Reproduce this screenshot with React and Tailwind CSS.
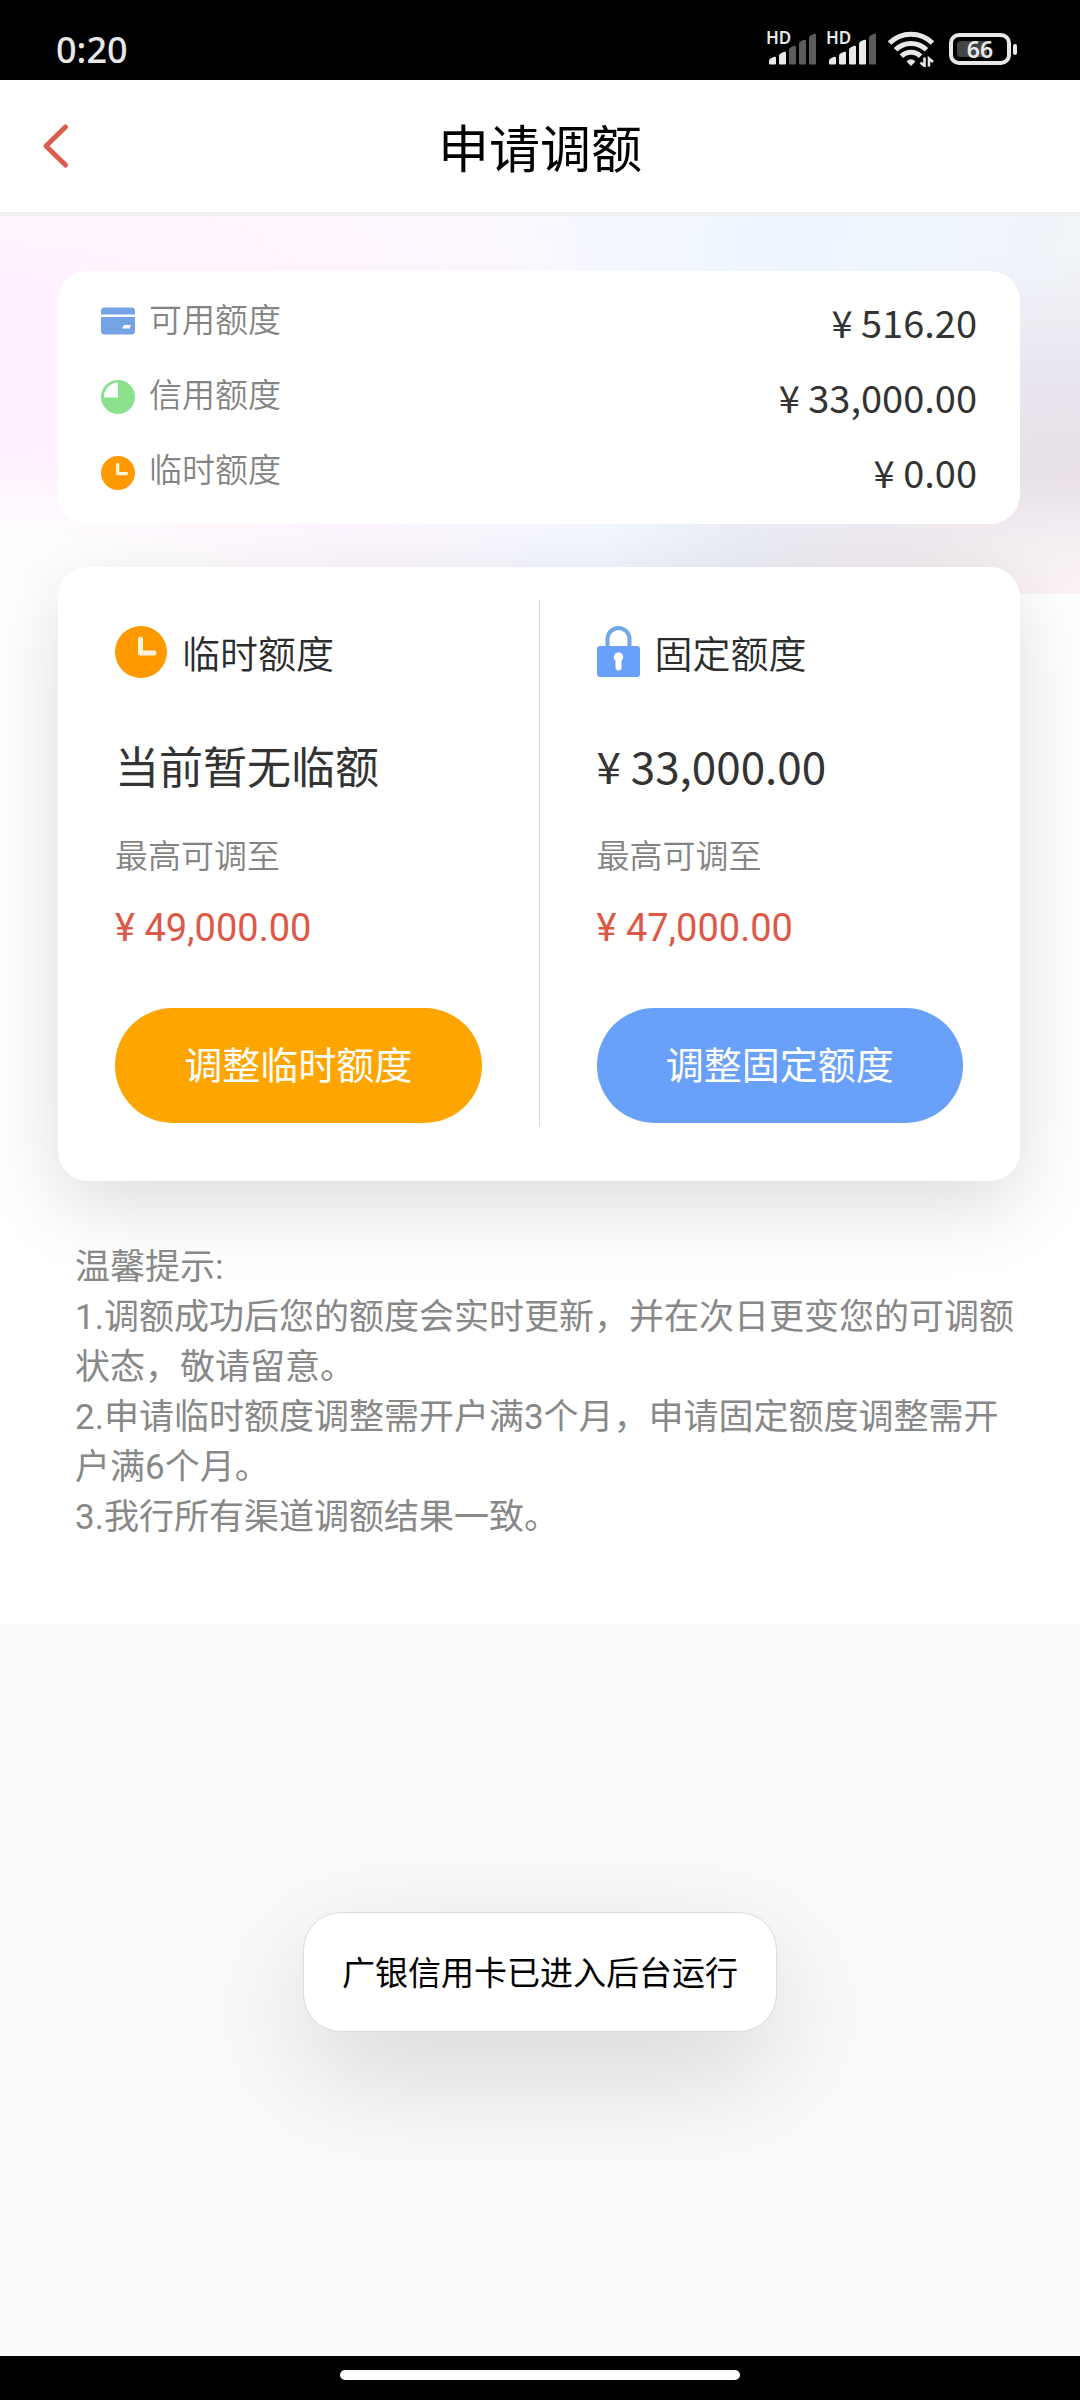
const CJK = "font-['Noto_Sans_CJK_SC',sans-serif]";
const MIXED = "font-['Roboto','Noto_Sans_CJK_SC',sans-serif]";

function Signal({ strength }) {
  const heights = [8, 13, 19, 25, 31];
  return (
    <svg className="h-12 w-[52px]" viewBox="0 -6 52 48" aria-hidden="true">
      <text x="-1" y="13" fontSize="17" fontWeight="600" fill="#e8e8e8" fontFamily="Noto Sans, sans-serif">HD</text>
      {heights.map((h, i) => (
        <path
          key={h}
          d={`M${2 + i * 10} ${34 - h + 4} q0 -2 1.5 -2.6 l3.5 -1.6 q2 -0.6 2 1 V32.5 q0 1 -1 1 h-5 q-1 0 -1 -1z`}
          fill={i < strength ? "#e8e8e8" : "#5c5c5c"}
        />
      ))}
    </svg>
  );
}

function Wifi() {
  return (
    <svg className="h-9 w-12" viewBox="0 0 48 36" fill="none" stroke="#e8e8e8" strokeWidth="5" aria-hidden="true">
      <path d="M2.500 12 A30.500 30.500 0 0 1 45.500 12" />
      <path d="M8.500 18.800 A22 22 0 0 1 39.500 18.800" />
      <path d="M14.500 25.200 A13.500 13.500 0 0 1 33.500 25.200" />
      <path d="M24 35 L19.500 30.500 Q24 26 28.500 30.500z" fill="#e8e8e8" stroke="none" />
      <path d="M37.500 26.500 V35 L33.500 31.500 M42 35.500 V27.500 L46 31" strokeWidth="2.6" />
    </svg>
  );
}

function Battery({ level }) {
  return (
    <div className="flex items-center gap-0.5">
      <div className="relative flex h-8 w-[62px] items-center justify-center rounded-[10px] border-4 border-[#e8e8e8] bg-black">
        <div className="absolute inset-y-1 left-1 rounded-sm bg-[#444444]" style={{ width: `${level * 0.46}px` }} />
        <span className="relative font-['Noto_Sans',sans-serif] text-[23px] leading-none font-semibold">{level}</span>
      </div>
      <div className="h-[11px] w-1 rounded-full bg-[#e8e8e8]" />
    </div>
  );
}

function CardIcon() {
  return (
    <svg className="h-9 w-[34px]" viewBox="0 0 34 36" aria-hidden="true">
      <path d="M3.500 2.500 H30.500 Q34 2.500 34 6 V9.500 H0 V6 Q0 2.500 3.500 2.500z M0 12 H34 V26 Q34 29.500 30.500 29.500 H3.500 Q0 29.500 0 26z" fill="#74a4e6" />
      <path d="M23 20 H30 L28.500 23.500 H21z" fill="#fff" />
    </svg>
  );
}

function PieIcon() {
  return (
    <svg className="h-9 w-[34px]" viewBox="0 0 34 36" aria-hidden="true">
      <circle cx="17" cy="17" r="17" fill="#8be08e" />
      <path d="M17 17.500 V2.500 A14.500 14.500 0 0 0 3 17.500z" fill="#fff" />
    </svg>
  );
}

function ClockIcon({ className }) {
  return (
    <svg className={className} viewBox="0 0 52 52" aria-hidden="true">
      <circle cx="26" cy="26" r="26" fill="#ff9900" />
      <path d="M25.500 13 V27 H39" fill="none" stroke="#fff3dc" strokeWidth="5" strokeLinecap="round" strokeLinejoin="round" />
    </svg>
  );
}

function LockIcon() {
  return (
    <svg className="h-[52px] w-[43px]" viewBox="0 0 43 52" aria-hidden="true">
      <path d="M10.500 22 V13 A11 11 0 0 1 32.500 13 V22" fill="none" stroke="#74a4ea" strokeWidth="4" />
      <rect y="20" width="43" height="31" rx="3" fill="#68a0fa" />
      <path d="M21.500 26.500 a4.500 4.500 0 0 1 3 8 v7 a3 3 0 0 1 -6 0 v-7 a4.500 4.500 0 0 1 3 -8z" fill="#fff" />
    </svg>
  );
}

function SummaryRow({ icon, label, amount }) {
  return (
    <div className="flex h-[75px] items-center justify-between">
      <dt className="flex items-center gap-3.5 pb-0.5 text-[33px] leading-none font-[350] text-[#848484]">
        {icon}
        <span className="pb-2">{label}</span>
      </dt>
      <dd className="pb-1 text-[38px] leading-none text-[#333333]">{amount}</dd>
    </div>
  );
}

function LimitColumn({ icon, name, current, max, action, color }) {
  return (
    <section className="flex flex-1 flex-col items-start px-[57px] pt-[26px] pb-[3px]">
      <h2 className="flex h-[52px] items-center gap-[15px] text-[38px] leading-none font-[350] text-[#2c2c2c]">
        {icon}
        {name}
      </h2>
      <p className="mt-[57px] text-[44px] leading-[60px] text-[#333333]">{current}</p>
      <p className="mt-[35px] text-[33px] leading-[48px] font-[350] text-[#848484]">最高可调至</p>
      <p className={`${MIXED} mt-[26px] text-[38px] leading-[48px] text-[#dd5847]`}>{max}</p>
      <button type="button" className={`mt-14 h-[115px] w-full rounded-full pb-1.5 text-[38px] text-white ${color}`}>
        {action}
      </button>
    </section>
  );
}

export default function App() {
  return (
    <div className={`${CJK} relative flex min-h-screen flex-col bg-[#fafafa]`}>
      <div className="flex h-20 items-center justify-between bg-black pr-[63px] pl-14 text-[#e8e8e8]">
        <time className="pt-[20px] font-['Noto_Sans',sans-serif] text-[36px] leading-none font-medium">0:20</time>
        <div className="flex items-center gap-2 pt-[18px]">
          <Signal strength={2} />
          <Signal strength={4} />
          <Wifi />
          <div className="pl-1.5"><Battery level={66} /></div>
        </div>
      </div>

      <header className="grid h-[136px] grid-cols-[1fr_auto_1fr] items-center border-b-4 border-[#efefef] bg-white">
        <button type="button" aria-label="返回" className="ml-10 w-8">
          <svg className="h-12 w-8" viewBox="0 0 32 48" fill="none" stroke="#dc5c50" strokeWidth="5" strokeLinecap="round" strokeLinejoin="round">
            <path d="M25.500 5 L6 24 L25.500 43" />
          </svg>
        </button>
        <h1 className="text-[51px] leading-none text-black">申请调额</h1>
      </header>

      <main className="bg-white pb-[81px]">
        <div className="bg-[radial-gradient(ellipse_38%_32%_at_0%_100%,#ffffff_0%,#ffffffcc_50%,transparent_100%),radial-gradient(ellipse_35%_32%_at_100%_100%,#fbf3f6_0%,#f6eff3cc_50%,transparent_100%),radial-gradient(ellipse_60%_90%_at_0%_40%,#fff0fe_0%,#fff5ff_60%,transparent_100%),radial-gradient(ellipse_45%_60%_at_100%_70%,#e8dfe8_0%,#e9e5ee_45%,transparent_100%),linear-gradient(100deg,#fdf6ff_0%,#f9f8ff_45%,#edf6ff_70%,#f2f4f8_100%)] pt-[55px] pr-[60px] pb-[70px] pl-[58px]">
          <dl className="rounded-[30px] bg-white px-[43px] pt-[15px] pb-[13px]">
            <SummaryRow icon={<CardIcon />} label="可用额度" amount="¥ 516.20" />
            <SummaryRow icon={<PieIcon />} label="信用额度" amount="¥ 33,000.00" />
            <SummaryRow icon={<ClockIcon className="size-[34px]" />} label="临时额度" amount="¥ 0.00" />
          </dl>
        </div>

        <div className="relative -mt-[27px] mr-[60px] ml-[58px] flex rounded-[30px] bg-white pt-[33px] pb-[55px] shadow-[0_24px_80px_rgba(0,0,0,0.14)]">
          <LimitColumn
            icon={<ClockIcon className="size-[52px]" />}
            name="临时额度"
            current="当前暂无临额"
            max="¥ 49,000.00"
            action="调整临时额度"
            color="bg-[#ffa500]"
          />
          <div className="w-px bg-[#d8d8d8]" />
          <LimitColumn
            icon={<LockIcon />}
            name="固定额度"
            current="¥ 33,000.00"
            max="¥ 47,000.00"
            action="调整固定额度"
            color="bg-[#68a0fa]"
          />
        </div>

        <div className={`${MIXED} relative mt-[62px] pr-[50px] pl-[75px] text-[35px] leading-[50px] text-[#888888]`}>
          <p>温馨提示:</p>
          <p>1.调额成功后您的额度会实时更新，并在次日更变您的可调额状态，敬请留意。</p>
          <p>2.申请临时额度调整需开户满3个月，申请固定额度调整需开户满6个月。</p>
          <p>3.我行所有渠道调额结果一致。</p>
        </div>
      </main>

      <div className="absolute inset-x-0 bottom-[368px] flex justify-center">
        <div role="status" className="rounded-[38px] border border-[#dcdcdc] bg-white px-[38px] pt-[35px] pb-[37px] text-[33px] leading-[46px] text-black shadow-[0_40px_120px_rgba(0,0,0,0.15)]">
          广银信用卡已进入后台运行
        </div>
      </div>

      <footer className="mt-auto flex h-11 justify-center bg-black pt-3.5">
        <div className="h-2.5 w-[37%] rounded-full bg-white" />
      </footer>
    </div>
  );
}
